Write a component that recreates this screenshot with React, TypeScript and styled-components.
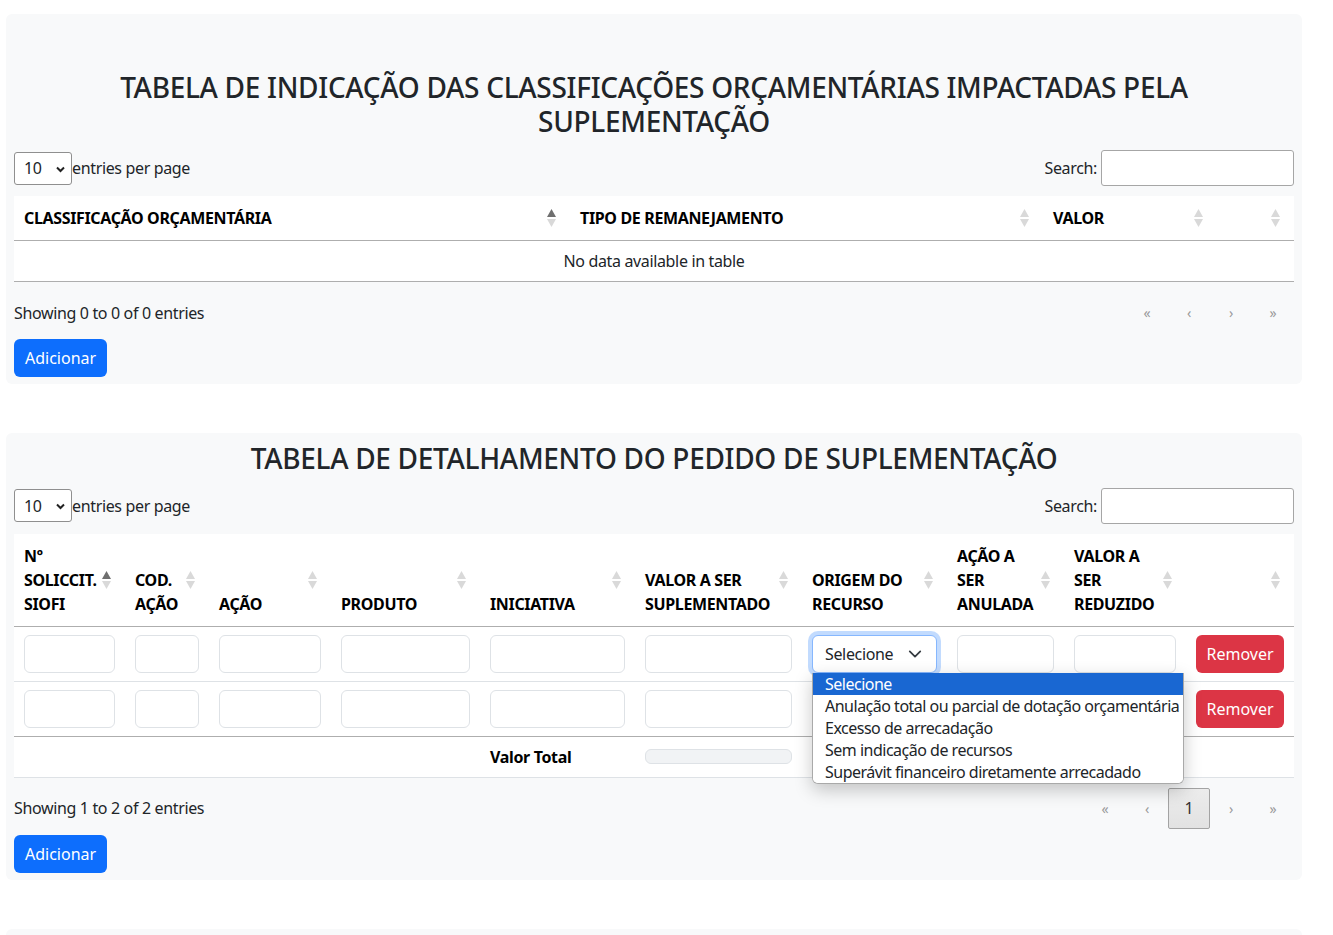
import React from 'react';
import styled, { createGlobalStyle } from 'styled-components';

const GlobalStyle = createGlobalStyle`
  body {
    margin: 0;
    background: #fff;
    font-family: "Noto Sans", "Open Sans", sans-serif;
    font-size: 16px;
    line-height: 1.5;
    letter-spacing: -0.35px;
    color: #212529;
  }
  * { box-sizing: border-box; }
`;

const Page = styled.div`
  display: flex;
  flex-direction: column;
  gap: 49px;
  padding: 14px 31px 0 6px;
`;

const Card = styled.section<{ $empty?: boolean }>`
  background: #f8f9fa;
  border-radius: 6px;
  padding: 8px 8px 7px;
  min-height: ${(p) => (p.$empty ? '120px' : 'auto')};
`;

const Title = styled.h3<{ $top: number }>`
  margin: 0 0 12px;
  padding-top: ${(p) => p.$top}px;
  font-size: 28px;
  font-weight: 500;
  line-height: 1.2;
  letter-spacing: -0.3px;
  text-align: center;
  color: #212529;
`;

const Toolbar = styled.div`
  display: flex;
  justify-content: space-between;
  align-items: center;
  height: 36px;
  margin-bottom: 10px;
`;

const LengthLabel = styled.label`
  display: flex;
  align-items: center;
`;

const LengthSelect = styled.div`
  position: relative;
  width: 58px;
  height: 33px;
  padding-left: 9px;
  border: 1px solid #8f8f8f;
  border-radius: 3px;
  background: #fff;
  display: flex;
  align-items: center;

  svg {
    position: absolute;
    right: 6px;
    top: 13px;
  }
`;

const SearchLabel = styled.label`
  display: flex;
  align-items: center;
  gap: 4px;
`;

const SearchInput = styled.input`
  width: 193px;
  height: 36px;
  border: 1px solid #a6a6a6;
  border-radius: 3px;
  background: #fff;
  font: inherit;
`;

const Table = styled.table`
  width: 100%;
  border-collapse: collapse;
  table-layout: fixed;
  background: #fff;
`;

const Th = styled.th<{ $w: number }>`
  position: relative;
  width: ${(p) => p.$w}px;
  padding: 10px 30px 10px 10px;
  text-align: left;
  vertical-align: bottom;
  font-weight: 700;
  color: #000;
  border-bottom: 1px solid #aeaeae;
`;

const SortIcon = styled.svg`
  position: absolute;
  right: 14px;
  top: 50%;
  transform: translateY(-50%);
`;

const Row = styled.tr<{ $last?: boolean }>`
  td {
    border-bottom: 1px solid ${(p) => (p.$last ? '#aeaeae' : '#dee2e6')};
  }
`;

const Td = styled.td<{ $center?: boolean; $bold?: boolean }>`
  padding: 8px 10px;
  vertical-align: middle;
  text-align: ${(p) => (p.$center ? 'center' : 'left')};
  font-weight: ${(p) => (p.$bold ? 700 : 400)};
  color: ${(p) => (p.$bold ? '#000' : '#212529')};
`;

const TextInput = styled.input`
  display: block;
  width: 100%;
  height: 38px;
  border: 1px solid #dee2e6;
  border-radius: 6px;
  background: #fff;
  font: inherit;
`;

const TotalBar = styled.div`
  height: 15px;
  border: 1px solid #dee2e6;
  border-radius: 6px;
  background: #f1f3f5;
`;

const DangerButton = styled.button`
  width: 100%;
  height: 38px;
  border: 0;
  border-radius: 6px;
  background: #dc3545;
  color: #fff;
  font: inherit;
`;

const SelectWrap = styled.div`
  position: relative;
`;

const FocusSelect = styled.div`
  height: 38px;
  display: flex;
  align-items: center;
  justify-content: space-between;
  padding: 0 14px 0 12px;
  border: 1px solid #86b7fe;
  border-radius: 6px;
  background: #fff;
  box-shadow: 0 0 0 4px rgba(13, 110, 253, 0.25);
`;

const OptionList = styled.ul`
  position: absolute;
  left: 0;
  top: 100%;
  width: 372px;
  margin: 0;
  padding: 0;
  list-style: none;
  background: #fff;
  border: 1px solid #a9a9a9;
  border-top: 0;
  border-radius: 0 0 6px 6px;
  box-shadow: 0 6px 18px rgba(0, 0, 0, 0.22);
  overflow: hidden;
  z-index: 5;
`;

const Option = styled.li<{ $active?: boolean }>`
  height: 22px;
  line-height: 22px;
  padding: 0 0 0 12px;
  white-space: nowrap;
  letter-spacing: -0.5px;
  background: ${(p) => (p.$active ? '#1967d2' : '#fff')};
  color: ${(p) => (p.$active ? '#fff' : '#212529')};
`;

const InfoRow = styled.div`
  display: flex;
  justify-content: space-between;
  align-items: center;
  height: 41px;
  margin-top: 10px;
`;

const Pager = styled.div`
  display: flex;
`;

const PageButton = styled.span<{ $current?: boolean }>`
  width: 42px;
  height: 41px;
  display: flex;
  align-items: center;
  justify-content: center;
  font-size: ${(p) => (p.$current ? '16px' : '14px')};
  color: ${(p) => (p.$current ? '#333' : '#9a9a9a')};
  border: 1px solid ${(p) => (p.$current ? '#a3a3a3' : 'transparent')};
  border-radius: 2px;
  background: ${(p) => (p.$current ? 'linear-gradient(#ececec, #e2e2e2)' : 'transparent')};
`;

const PrimaryButton = styled.button`
  display: block;
  height: 38px;
  margin-top: 6px;
  padding: 0 11px;
  border: 0;
  border-radius: 6px;
  background: #0d6efd;
  color: #fff;
  font: inherit;
`;

function Sort({ active }: { active?: boolean }) {
  return (
    <SortIcon width="9" height="18" viewBox="0 0 9 18">
      <polygon points="0,8 4.5,0 9,8" fill={active ? '#6f6f6f' : '#d9d9d9'} />
      <polygon points="0,10 4.5,18 9,10" fill="#d9d9d9" />
    </SortIcon>
  );
}

function SmallChevron() {
  return (
    <svg width="9" height="7" viewBox="0 0 9 7">
      <path d="M1 1.5l3.5 3.5L8 1.5" fill="none" stroke="#222" strokeWidth="2" />
    </svg>
  );
}

function Chevron() {
  return (
    <svg width="14" height="14" viewBox="0 0 16 16">
      <path d="m2 5 6 6 6-6" fill="none" stroke="#343a40" strokeWidth="2" strokeLinecap="round" strokeLinejoin="round" />
    </svg>
  );
}

function Toolbox() {
  return (
    <Toolbar>
      <LengthLabel>
        <LengthSelect>
          10
          <SmallChevron />
        </LengthSelect>
        entries per page
      </LengthLabel>
      <SearchLabel>
        Search:
        <SearchInput />
      </SearchLabel>
    </Toolbar>
  );
}

function Pagination({ withPage }: { withPage?: boolean }) {
  return (
    <Pager>
      <PageButton>«</PageButton>
      <PageButton>‹</PageButton>
      {withPage && <PageButton $current>1</PageButton>}
      <PageButton>›</PageButton>
      <PageButton>»</PageButton>
    </Pager>
  );
}

const detailCols: { label: React.ReactNode; w: number }[] = [
  { label: <>Nº<br />SOLICCIT.<br />SIOFI</>, w: 111 },
  { label: <>COD.<br />AÇÃO</>, w: 84 },
  { label: 'AÇÃO', w: 122 },
  { label: 'PRODUTO', w: 149 },
  { label: 'INICIATIVA', w: 155 },
  { label: <>VALOR A SER<br />SUPLEMENTADO</>, w: 167 },
  { label: <>ORIGEM DO<br />RECURSO</>, w: 145 },
  { label: <>AÇÃO A<br />SER<br />ANULADA</>, w: 117 },
  { label: <>VALOR A<br />SER<br />REDUZIDO</>, w: 122 },
  { label: '', w: 108 },
];

const origins = [
  'Selecione',
  'Anulação total ou parcial de dotação orçamentária',
  'Excesso de arrecadação',
  'Sem indicação de recursos',
  'Superávit financeiro diretamente arrecadado',
];

function DetailRow({ open, last }: { open?: boolean; last?: boolean }) {
  return (
    <Row $last={last}>
      <Td><TextInput /></Td>
      <Td><TextInput /></Td>
      <Td><TextInput /></Td>
      <Td><TextInput /></Td>
      <Td><TextInput /></Td>
      <Td><TextInput /></Td>
      <Td>
        {open ? (
          <SelectWrap>
            <FocusSelect>
              Selecione
              <Chevron />
            </FocusSelect>
            <OptionList>
              {origins.map((o, i) => (
                <Option key={o} $active={i === 0}>{o}</Option>
              ))}
            </OptionList>
          </SelectWrap>
        ) : (
          <TextInput />
        )}
      </Td>
      <Td><TextInput /></Td>
      <Td><TextInput /></Td>
      <Td><DangerButton>Remover</DangerButton></Td>
    </Row>
  );
}

export default function App() {
  return (
    <>
      <GlobalStyle />
      <Page>
        <Card>
          <Title $top={49}>
            TABELA DE INDICAÇÃO DAS CLASSIFICAÇÕES ORÇAMENTÁRIAS IMPACTADAS PELA SUPLEMENTAÇÃO
          </Title>
          <Toolbox />
          <Table>
            <thead>
              <tr>
                <Th $w={556}>CLASSIFICAÇÃO ORÇAMENTÁRIA<Sort active /></Th>
                <Th $w={473}>TIPO DE REMANEJAMENTO<Sort /></Th>
                <Th $w={174}>VALOR<Sort /></Th>
                <Th $w={77}><Sort /></Th>
              </tr>
            </thead>
            <tbody>
              <Row $last>
                <Td colSpan={4} $center>No data available in table</Td>
              </Row>
            </tbody>
          </Table>
          <InfoRow>
            <span>Showing 0 to 0 of 0 entries</span>
            <Pagination />
          </InfoRow>
          <PrimaryButton>Adicionar</PrimaryButton>
        </Card>

        <Card>
          <Title $top={1}>TABELA DE DETALHAMENTO DO PEDIDO DE SUPLEMENTAÇÃO</Title>
          <Toolbox />
          <Table>
            <thead>
              <tr>
                {detailCols.map((c, i) => (
                  <Th key={i} $w={c.w}>
                    {c.label}
                    <Sort active={i === 0} />
                  </Th>
                ))}
              </tr>
            </thead>
            <tbody>
              <DetailRow open />
              <DetailRow last />
            </tbody>
            <tfoot>
              <Row>
                <Td colSpan={4} />
                <Td $bold>Valor Total</Td>
                <Td><TotalBar /></Td>
                <Td colSpan={4} />
              </Row>
            </tfoot>
          </Table>
          <InfoRow>
            <span>Showing 1 to 2 of 2 entries</span>
            <Pagination withPage />
          </InfoRow>
          <PrimaryButton>Adicionar</PrimaryButton>
        </Card>

        <Card $empty />
      </Page>
    </>
  );
}
